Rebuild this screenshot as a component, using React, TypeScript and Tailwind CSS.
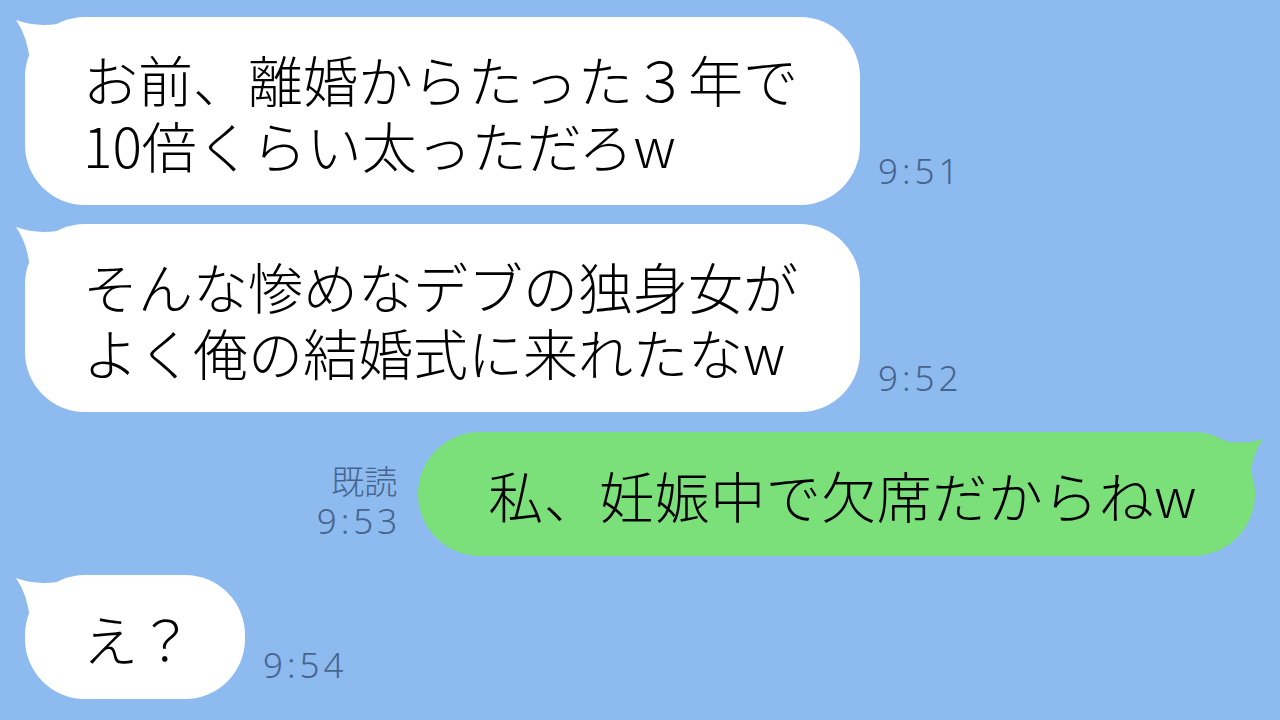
import React from "react"

const jp = { fontFamily: '"Noto Sans CJK JP", "Noto Sans", sans-serif' }

const LeftTail = () => (
    <svg className="absolute left-[-10px] top-0" width="45" height="50" viewBox="0 0 45 50">
        <path d="M1 3 Q20 10 42 7 L32 46 L15 46 Q13 20 1 3 Z" fill="#ffffff" />
    </svg>
)

const RightTail = () => (
    <svg className="absolute right-[-10px] top-0 -scale-x-100" width="45" height="50" viewBox="0 0 45 50">
        <path d="M2 7 Q20 13 42 9 L32 46 L15 46 Q13 22 2 7 Z" fill="#7be07a" />
    </svg>
)

const Time = ({ children }: { children: React.ReactNode }) => (
    <div
        className="text-[35px] font-light leading-[35px] tracking-[4px] text-[#47648c] mb-[17px] shrink-0"
        style={{ fontFamily: '"Noto Sans", sans-serif' }}
    >
        {children}
    </div>
)

interface LeftMessageProps {
    lines: string[]
    time: string
}

const LeftMessage = ({ lines, time }: LeftMessageProps) => {
    const double = lines.length > 1
    return (
        <div className="flex items-end gap-[18px] pl-[25px]">
            <div
                className={`relative bg-white rounded-[60px] pl-[58px] text-[55px] font-light leading-[66px] text-black whitespace-nowrap ${double ? "py-[28px] pr-[62px]" : "py-[29px] pr-[52px]"}`}
                style={jp}
            >
                <LeftTail />
                {lines.map((l) => (
                    <div key={l}>{l}</div>
                ))}
            </div>
            <Time>{time}</Time>
        </div>
    )
}

export default function App() {
    return (
        <div className="w-[1280px] h-[720px] bg-[#8dbaef] overflow-hidden flex flex-col gap-[19px] pt-[17px]">
            <LeftMessage lines={["お前、離婚からたった３年で", "10倍くらい太っただろw"]} time="9:51" />
            <LeftMessage lines={["そんな惨めなデブの独身女が", "よく俺の結婚式に来れたなw"]} time="9:52" />

            <div className="flex items-end justify-end gap-[21px] pr-[25px] mt-px">
                <div className="flex flex-col items-end mb-[15px] text-[#47648c] font-light">
                    <div className="text-[33px] leading-[42px]" style={jp}>既読</div>
                    <div
                        className="text-[35px] leading-[40px] tracking-[4px] mr-[-4px]"
                        style={{ fontFamily: '"Noto Sans", sans-serif' }}
                    >
                        9:53
                    </div>
                </div>
                <div
                    className="relative bg-[#7be07a] rounded-[62px] pl-[70px] pr-[58px] py-[29px] text-[55px] font-light leading-[66px] text-black whitespace-nowrap tracking-[0.5px]"
                    style={jp}
                >
                    <RightTail />
                    私、妊娠中で欠席だからねw
                </div>
            </div>

            <LeftMessage lines={["え？"]} time="9:54" />
        </div>
    )
}
